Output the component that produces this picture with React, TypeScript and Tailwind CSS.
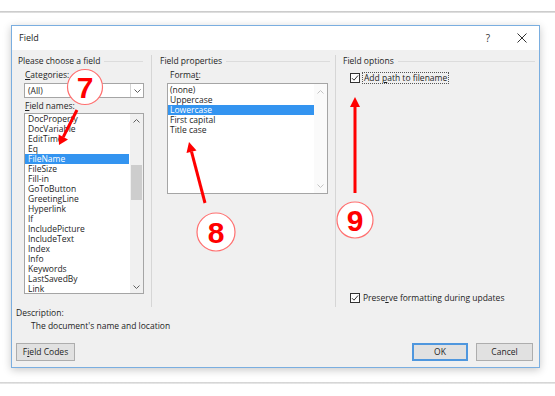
import React from "react";

const items1 = [
  "DocProperty",
  "DocVariable",
  "EditTime",
  "Eq",
  "FileName",
  "FileSize",
  "Fill-in",
  "GoToButton",
  "GreetingLine",
  "Hyperlink",
  "If",
  "IncludePicture",
  "IncludeText",
  "Index",
  "Info",
  "Keywords",
  "LastSavedBy",
  "Link",
];

const items2 = ["(none)", "Uppercase", "Lowercase", "First capital", "Title case"];

function Chevron({ up, color = "#606060" }: { up?: boolean; color?: string }) {
  return (
    <svg width="7" height="4" viewBox="0 0 7 4">
      <path
        d={up ? "M0.5 3.5L3.5 0.5L6.5 3.5" : "M0.5 0.5L3.5 3.5L6.5 0.5"}
        stroke={color}
        fill="none"
        strokeWidth="1"
      />
    </svg>
  );
}

function Check() {
  return (
    <div className="w-[10px] h-[10px] border border-[#333] bg-white flex items-center justify-center shrink-0">
      <svg width="8" height="8" viewBox="0 0 8 8">
        <path d="M1 4.2L3 6.2L7 1.5" stroke="#333" fill="none" strokeWidth="1" />
      </svg>
    </div>
  );
}

function GroupTitle({ text }: { text: string }) {
  return (
    <div className="flex items-center h-[12px]">
      <span className="whitespace-nowrap">{text}</span>
      <div className="flex-1 h-px bg-[#dcdcdc] ml-[4px]" />
    </div>
  );
}

export default function App() {
  return (
    <div className="relative w-[555px] h-[396px] bg-white overflow-hidden font-['Open_Sans',sans-serif] text-[8.5px] leading-[12px] text-[#1e1e1e]">
      <div className="h-[11px]" />
      <div className="h-[2px] bg-gradient-to-b from-[#c4c4c4] to-[#e6e6e6]" />
      <div className="h-[12px]" />
      {/* dialog */}
      <div className="ml-[11px] w-[529px] h-[343px] border border-[#7aaee0] flex flex-col shadow-[0_2px_8px_rgba(0,0,0,0.22)]">
        {/* title bar */}
        <div className="h-[24px] bg-white flex items-center">
          <span className="pl-[7px] text-[9px]">Field</span>
          <div className="ml-auto flex h-full">
            <div className="w-[34px] flex items-center justify-center text-[10px] text-[#333]">?</div>
            <div className="w-[34px] flex items-center justify-center">
              <svg width="10" height="10" viewBox="0 0 10 10">
                <path d="M0.5 0.5L9.5 9.5M9.5 0.5L0.5 9.5" stroke="#333" strokeWidth="1" />
              </svg>
            </div>
          </div>
        </div>
        {/* body */}
        <div className="flex-1 bg-[#f0f0f0] flex flex-col pt-[5px]">
          <div className="flex h-[252px]">
            {/* col 1 */}
            <div className="w-[139px] pl-[6px] pr-[8px] flex flex-col items-start">
              <div className="w-full">
                <GroupTitle text="Please choose a field" />
              </div>
              <div className="ml-[7px] mt-[2px] h-[12px]">
                <u>C</u>ategories:
              </div>
              <div className="ml-[6px] mt-[2px] w-[120px] h-[15px] border border-[#a5a5a5] bg-white flex">
                <div className="flex-1 pl-[3px] leading-[13px]">(All)</div>
                <div className="w-[13px] border-l border-[#d4d4d4] flex items-center justify-center">
                  <Chevron />
                </div>
              </div>
              <div className="ml-[7px] mt-[2px] h-[12px]">
                <u>F</u>ield names:
              </div>
              <div className="ml-[6px] mt-[1px] w-[120px] h-[181px] border border-[#a5a5a5] bg-white flex">
                <div className="flex-1 flex flex-col overflow-hidden">
                  {items1.map((t) => (
                    <div
                      key={t}
                      className={
                        "h-[10px] shrink-0 leading-[10px] pl-[3px] whitespace-nowrap " +
                        (t === "FileName" ? "bg-[#3394f0] text-white mr-px" : "")
                      }
                    >
                      {t}
                    </div>
                  ))}
                </div>
                <div className="w-[13px] bg-[#f0f0f0] flex flex-col">
                  <div className="h-[13px] flex items-center justify-center">
                    <Chevron up />
                  </div>
                  <div className="flex-1">
                    <div className="mt-[38px] mx-[1px] h-[35px] bg-[#cdcdcd]" />
                  </div>
                  <div className="h-[13px] flex items-center justify-center">
                    <Chevron />
                  </div>
                </div>
              </div>
            </div>
            <div className="w-px bg-[#d6d6d6]" />
            {/* col 2 */}
            <div className="w-[183px] pl-[8px] pr-[5px] flex flex-col items-start">
              <div className="w-full">
                <GroupTitle text="Field properties" />
              </div>
              <div className="ml-[10px] mt-[2px] h-[12px]">
                Forma<u>t</u>:
              </div>
              <div className="ml-[7px] mt-[2px] w-[161px] h-[111px] border border-[#a5a5a5] bg-white flex">
                <div className="flex-1 flex flex-col pt-px overflow-hidden">
                  {items2.map((t) => (
                    <div
                      key={t}
                      className={
                        "h-[10px] shrink-0 leading-[10px] pl-[2px] whitespace-nowrap " +
                        (t === "Lowercase" ? "bg-[#3394f0] text-white" : "")
                      }
                    >
                      {t}
                    </div>
                  ))}
                </div>
                <div className="w-[13px] bg-[#fafafa] flex flex-col justify-between">
                  <div className="h-[15px] flex items-center justify-center">
                    <Chevron up color="#c4c4c4" />
                  </div>
                  <div className="h-[15px] flex items-center justify-center">
                    <Chevron color="#c4c4c4" />
                  </div>
                </div>
              </div>
            </div>
            <div className="w-px bg-[#d6d6d6]" />
            {/* col 3 */}
            <div className="flex-1 pl-[7px] pr-[4px] flex flex-col">
              <GroupTitle text="Field options" />
              <div className="mt-[5px] ml-[7px] flex items-center h-[12px]">
                <Check />
                <div className="ml-[2px] h-[12px] border border-dotted border-[#555] px-px leading-[10px] whitespace-nowrap">
                  Add <u>p</u>ath to filename
                </div>
              </div>
              <div className="mt-auto mb-[4px] ml-[7px] flex items-center h-[11px]">
                <Check />
                <div className="ml-[3px] whitespace-nowrap">
                  Prese<u>r</u>ve formatting during updates
                </div>
              </div>
            </div>
          </div>
          <div className="pl-[4px] h-[12px]">Description:</div>
          <div className="pl-[19px] mt-[1px] h-[12px]">The document's name and location</div>
          <div className="mt-[11px] flex px-[4px] pr-[6px]">
            <div className="w-[59px] h-[18px] bg-[#e1e1e1] border border-[#adadad] flex items-center justify-center">
              F<u>i</u>eld Codes
            </div>
            <div className="ml-auto w-[56px] h-[18px] bg-[#e1e1e1] border-2 border-[#4f97de] flex items-center justify-center">
              OK
            </div>
            <div className="ml-[8px] w-[57px] h-[18px] bg-[#e1e1e1] border border-[#adadad] flex items-center justify-center">
              Cancel
            </div>
          </div>
        </div>
      </div>
      <div className="mt-[14px] h-[2px] bg-gradient-to-b from-[#cfcfcf] to-[#ececec]" />

      {/* annotations */}
      <svg className="absolute inset-0 pointer-events-none" width="555" height="396" viewBox="0 0 555 396">
        {/* arrow 7 */}
        <line x1="77" y1="110" x2="63.2" y2="137.1" stroke="#ff0000" strokeWidth="3" />
        <polygon points="59,145 68,139.6 58.6,134.6" fill="#ff0000" />
        {/* arrow 8 */}
        <line x1="205" y1="203" x2="191.5" y2="151.7" stroke="#ff0000" strokeWidth="3" />
        <polygon points="189,142 196.5,150.4 186.5,153" fill="#ff0000" />
        {/* arrow 9 */}
        <line x1="355" y1="193" x2="355" y2="105" stroke="#ff0000" strokeWidth="3" />
        <polygon points="355,97 360,107 350,107" fill="#ff0000" />
        {/* circles */}
        <circle cx="85" cy="87" r="17.5" fill="white" stroke="#ff7070" strokeWidth="1.2" />
        <text x="85" y="98" textAnchor="middle" fontFamily="'Liberation Sans', Arial, sans-serif" fontWeight="700" fontSize="30" fill="#ff0000">7</text>
        <circle cx="216" cy="232" r="19" fill="white" stroke="#ff7070" strokeWidth="1.2" />
        <text x="216" y="243" textAnchor="middle" fontFamily="'Liberation Sans', Arial, sans-serif" fontWeight="700" fontSize="30" fill="#ff0000">8</text>
        <circle cx="355" cy="220" r="18" fill="white" stroke="#ff7070" strokeWidth="1.2" />
        <text x="355" y="231" textAnchor="middle" fontFamily="'Liberation Sans', Arial, sans-serif" fontWeight="700" fontSize="30" fill="#ff0000">9</text>
      </svg>
    </div>
  );
}
